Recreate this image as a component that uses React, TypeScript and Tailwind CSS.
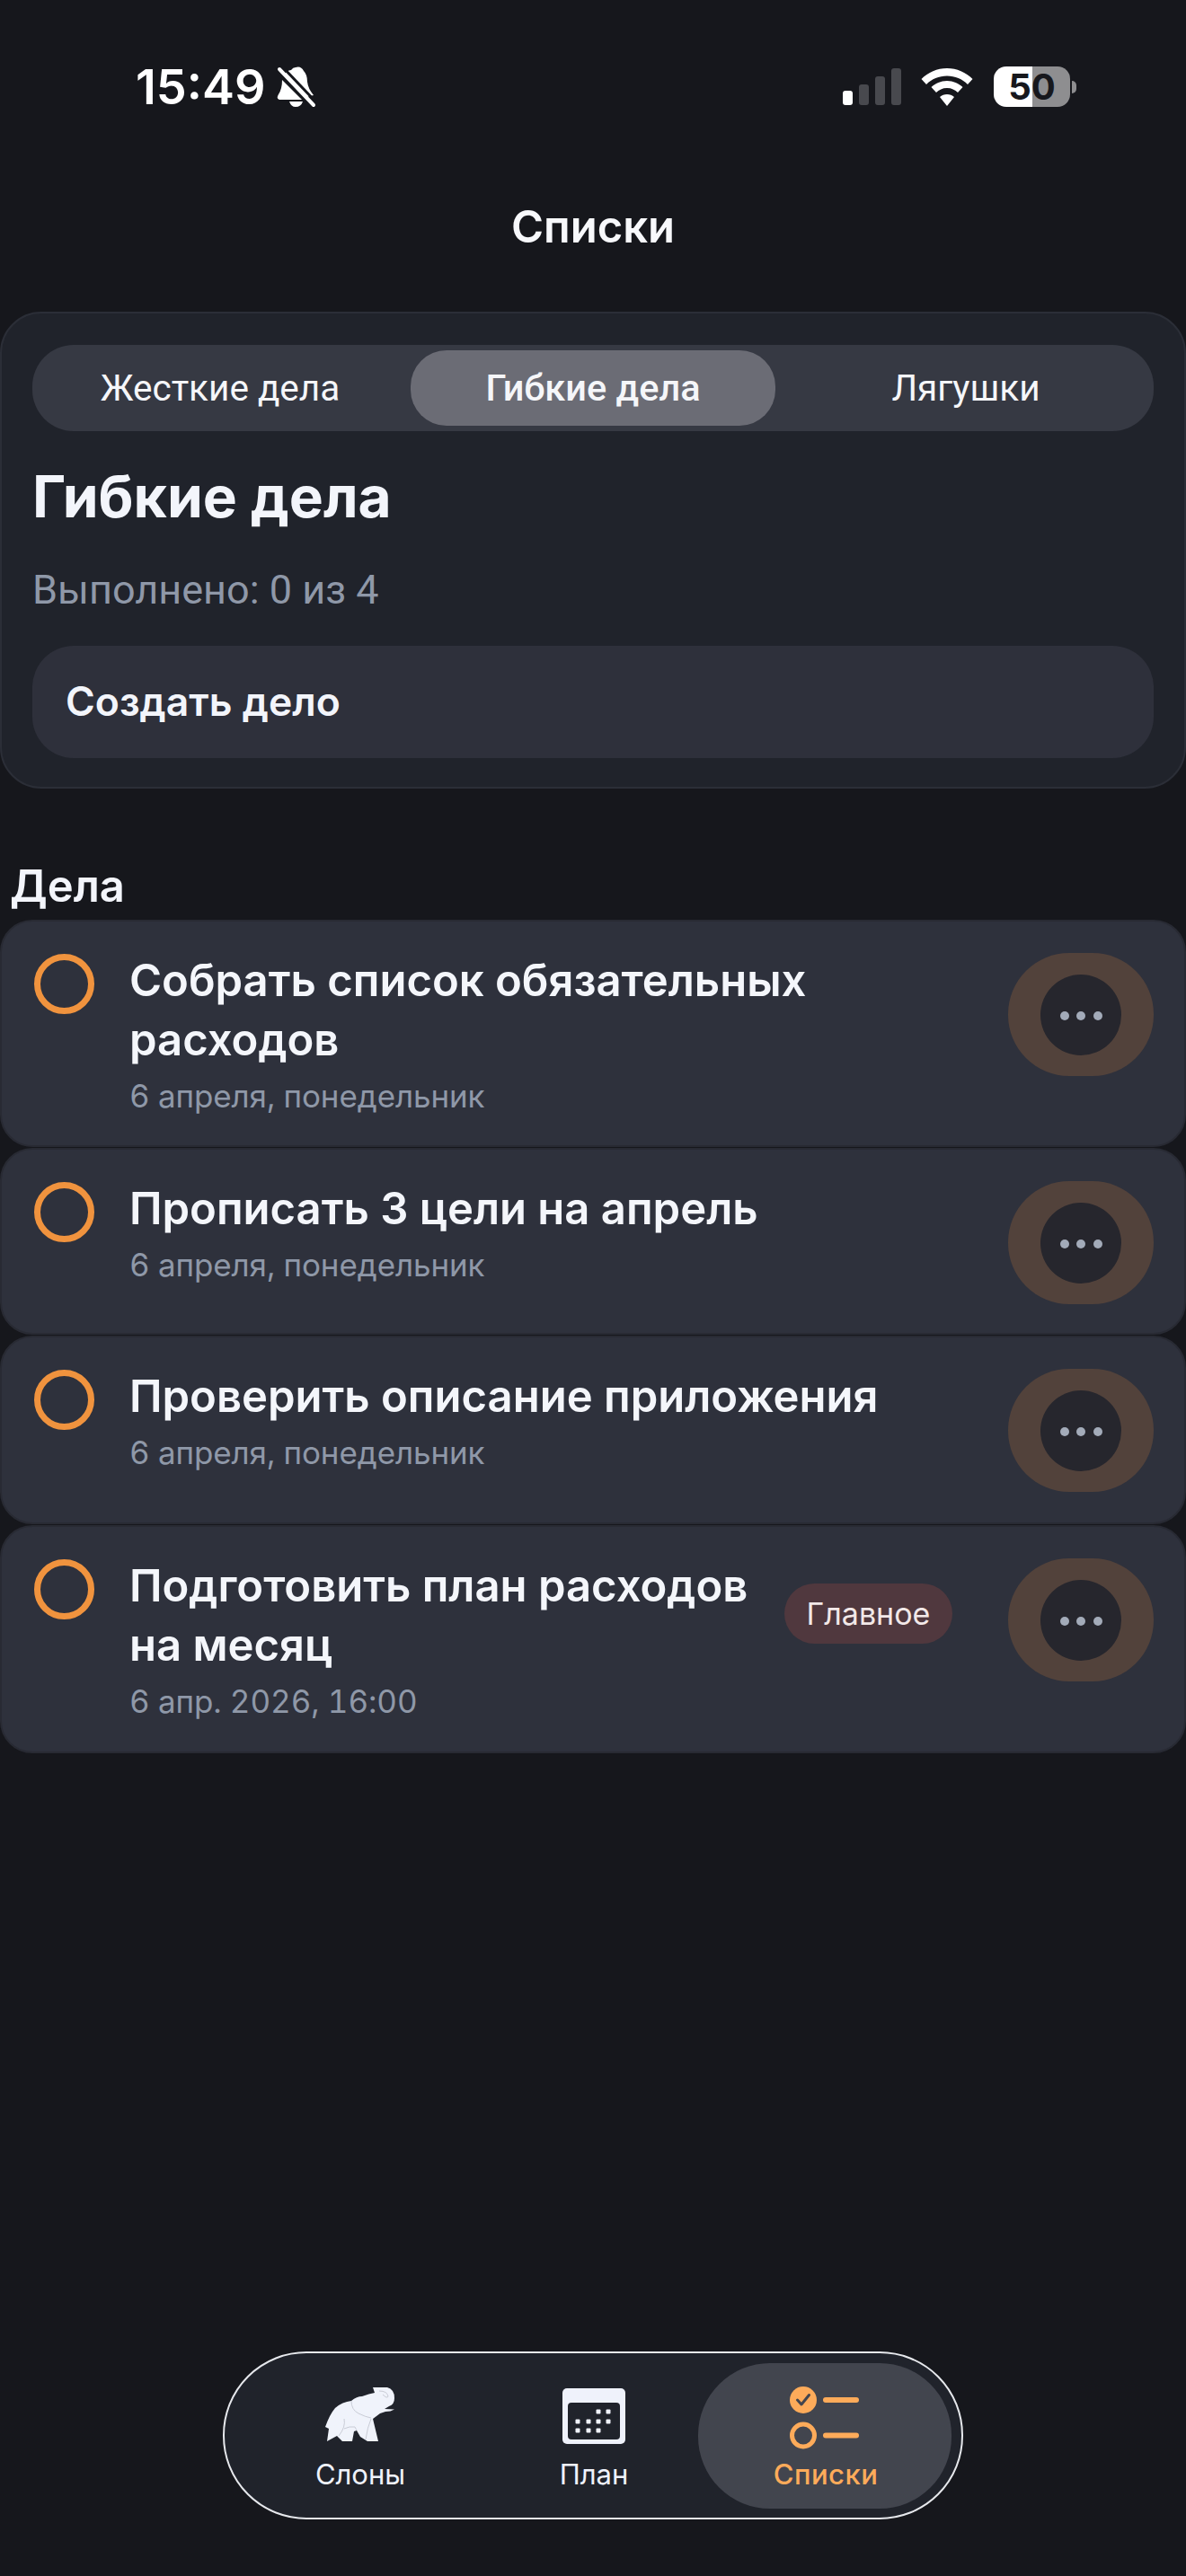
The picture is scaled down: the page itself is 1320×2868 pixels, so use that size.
const Row = ({ title, date, tag, h }: { title: string[]; date: string; tag?: boolean; h: string }) => (
  <div className={`${h} flex items-start rounded-[36px] border-2 border-[#282a33] bg-[#2e313c] pl-[36px] pr-[34px] pt-[34px]`}>
    <div className="mt-[2px] size-[67px] shrink-0 rounded-full border-[7px] border-[#f0933e]" />
    <div className="-mt-[1px] ml-[39px] min-w-0 flex-1">
      {title.map((t) => (
        <div key={t} className="h-[66px] whitespace-nowrap text-[49px] leading-[66px] font-semibold text-[#f4f6fb]">{t}</div>
      ))}
      <div className="mt-[7px] h-[44px] whitespace-nowrap text-[35px] leading-[44px] tracking-[-0.1px] tabular-nums text-[#8f98a8]">{date}</div>
    </div>
    {tag && (
      <div className="mr-[62px] mt-[29px] flex h-[67px] w-[187px] items-center justify-center rounded-full bg-[#50383e] text-[34px] text-[#f2e8e8]">Главное</div>
    )}
    <div className="mt-[1px] flex h-[137px] w-[162px] shrink-0 items-center justify-center rounded-[68px] bg-[#52423b]">
      <div className="flex size-[90px] items-center justify-center gap-[8.5px] rounded-full bg-[#26262d] pt-[3px]">
        <span className="size-[10px] rounded-full bg-[#a3abb9]" />
        <span className="size-[10px] rounded-full bg-[#a3abb9]" />
        <span className="size-[10px] rounded-full bg-[#a3abb9]" />
      </div>
    </div>
  </div>
);

const Elephant = () => (
  <svg width="80" height="62" viewBox="22 17 80 62" className="block">
    <path
      fill="#f0f3fb"
      d="M76 18 L92 18 Q100 20 100 30 Q100 37 94 39 L89 42 L100 42.500 Q96 45 90 45 L84 47 L76 53 L82 78 L70 78 L62 73 L58 66 L55 67 L53 78 L50 78 L42 78 L36 72 L25 78 L27 64 L23 62 Q28 48 34 41 Q42 34 52 33 Q58 28 64 28 Q72 25 78 24 Z"
    />
    <path fill="none" stroke="#c9ccd6" strokeWidth="1" d="M52 33 Q52 43 60 47 Q68 51 74 52 M83 22 Q92 22 93 28 Q92 31 87 26 M44 53 Q46 62 38 72 M44 64 Q50 61 56 62 L58 66 M74 53 Q70 62 68 76" />
  </svg>
);

const Calendar = () => (
  <svg width="70" height="62" viewBox="0 0 70 62" className="block">
    <rect width="70" height="62" rx="5" fill="#eff2fb" />
    <rect x="6" y="16" width="58" height="41" rx="4" fill="#20232b" />
    {[
      [40, 26], [51, 26],
      [17, 37], [29, 37], [40, 37], [51, 37],
      [17, 47], [29, 47], [40, 47],
    ].map(([x, y]) => (
      <rect key={`${x}-${y}`} x={x - 2.5} y={y - 2.5} width="5" height="5" rx="1" fill="#eff2fb" />
    ))}
  </svg>
);

const ListsIcon = () => (
  <svg width="80" height="70" viewBox="0 0 80 70" className="block">
    <circle cx="15" cy="15" r="15" fill="#fdab5a" />
    <path d="M8.500 15 L13 20 L21.500 9.500" fill="none" stroke="#42454e" strokeWidth="3" strokeLinecap="round" strokeLinejoin="round" />
    <rect x="37" y="12" width="40" height="6" rx="3" fill="#fdab5a" />
    <circle cx="15" cy="54.500" r="12.500" fill="none" stroke="#fdab5a" strokeWidth="5" />
    <rect x="37" y="51.500" width="40" height="6" rx="3" fill="#fdab5a" />
  </svg>
);

export default function App() {
  return (
    <div className="flex min-h-[2868px] w-[1320px] flex-col bg-[#16171c] font-['Inter',sans-serif] text-white">
      {/* status bar */}
      <div className="flex h-[194px] shrink-0 items-start justify-between pl-[151px] pr-[122px] pt-[70px]">
        <div className="flex items-center gap-[12px]">
          <span className="text-[54px] leading-[54px] font-semibold">15:49</span>
          <svg width="44" height="46" viewBox="0 0 44 46">
            <path fill="#fff" d="M21 1 Q27 -1 30 5 Q34 9 34 17 Q35 25 41 32 L33 34 L8 10 Q11 4 16 4 Q18 1 21 1Z M6 15 L28 37 L3 37 Q-1 36 2 31 Q6 25 6 15Z M14 39 L29 39 Q27 45 21 45 Q16 45 14 39Z" />
            <path stroke="#fff" strokeWidth="4" strokeLinecap="round" d="M3 3 L41 43" />
            <path stroke="#16171c" strokeWidth="3" d="M6 0 L44 40" />
          </svg>
        </div>
        <div className="mt-[4px] flex items-center">
          <div className="flex items-end gap-[7px]">
            <span className="h-[16px] w-[11px] rounded-[3px] bg-white" />
            <span className="h-[23px] w-[11px] rounded-[3px] bg-[#48494e]" />
            <span className="h-[32px] w-[11px] rounded-[3px] bg-[#48494e]" />
            <span className="h-[41px] w-[11px] rounded-[3px] bg-[#48494e]" />
          </div>
          <svg width="58" height="42" viewBox="0 0 58 42" className="ml-[22px]">
            <path fill="#fff" d="M29 0 C40 0 50 4.500 57.500 12 L52 18 C46 12 38 8.500 29 8.500 C20 8.500 12 12 6 18 L0.500 12 C8 4.500 18 0 29 0Z M29 14 C36 14 42 17 46.500 21 L41 27 C38 24 34 22 29 22 C24 22 20 24 17 27 L11.500 21 C16 17 22 14 29 14Z M29 29 C32 29 35 30 37 32 L29 42 L21 32 C23 30 26 29 29 29Z" />
          </svg>
          <div className="ml-[23px] flex items-center">
            <div className="flex h-[45px] w-[85px] items-center justify-center rounded-[14px] bg-[linear-gradient(90deg,#ffffff_0%,#ffffff_50.600%,#8e8e90_50.600%,#8e8e90_100%)] text-[40px] leading-none font-bold text-[#17181d]">50</div>
            <div className="ml-[2px] h-[14px] w-[5px] rounded-r-full bg-[#8e8e90]" />
          </div>
        </div>
      </div>

      <div className="h-[120px] shrink-0 pt-[34px] text-center text-[49px] leading-[50px] font-semibold text-[#f7f8fb]">Списки</div>

      {/* summary card */}
      <div className="mt-[33px] flex h-[531px] shrink-0 flex-col rounded-[46px] border-2 border-[#2b2e37] bg-[#20232b] px-[34px] pt-[35px]">
        <div className="flex h-[96px] shrink-0 gap-[9px] rounded-[46px] bg-[#363943] p-[6px] font-['Roboto',sans-serif] text-[40.5px] text-[#f5f6f9]">
          <div className="flex flex-1 items-center justify-center rounded-[40px]">Жесткие дела</div>
          <div className="flex flex-1 items-center justify-center rounded-[40px] bg-[#6b6c75] text-[41.5px] font-medium">Гибкие дела</div>
          <div className="flex flex-1 items-center justify-center rounded-[40px]">Лягушки</div>
        </div>
        <div className="mt-[37px] text-[64px] leading-[72px] font-bold text-[#f3f5fb]">Гибкие дела</div>
        <div className="mt-[43px] font-['Roboto',sans-serif] text-[45px] leading-[50px] text-[#8f98a8]">Выполнено: 0 из 4</div>
        <div className="mt-[37px] flex h-[125px] shrink-0 items-center rounded-[46px] bg-[#2e303b] pl-[37px] text-[44.5px] font-semibold text-[#f3f5fb]">Создать дело</div>
      </div>

      <div className="mt-[86px] h-[46px] pl-[11px] text-[49px] leading-[46px] font-semibold text-[#f3f5fb]">Дела</div>

      <div className="mt-[14px] flex flex-col gap-[1px]">
        <Row h="h-[253px]" title={["Собрать список обязательных", "расходов"]} date="6 апреля, понедельник" />
        <Row h="h-[208px]" title={["Прописать 3 цели на апрель"]} date="6 апреля, понедельник" />
        <Row h="h-[210px]" title={["Проверить описание приложения"]} date="6 апреля, понедельник" />
        <Row h="h-[254px]" tag title={["Подготовить план расходов", "на месяц"]} date="6 апр. 2026, 16:00" />
      </div>

      {/* bottom nav */}
      <div className="mt-auto mb-[63px] flex h-[187px] w-[824px] items-start self-center rounded-[93px] border-2 border-[#e6e8ec] bg-[#20232b] pl-[40px]">
        <div className="flex w-[222px] flex-col items-center pt-[37px]">
          <Elephant />
          <span className="mt-[17px] text-[31px] leading-[38px] text-[#eff2fb]">Слоны</span>
        </div>
        <div className="ml-[33px] flex w-[232px] flex-col items-center pt-[39px]">
          <Calendar />
          <span className="mt-[15px] text-[31px] leading-[38px] text-[#eff2fb]">План</span>
        </div>
        <div className="mt-[11px] flex h-[162px] w-[282px] flex-col items-center rounded-[80px] bg-[#42454e] pl-[2px] pt-[26px]">
          <ListsIcon />
          <span className="mt-[9px] text-[31px] leading-[38px] font-medium tracking-[0.5px] text-[#fdab5a]">Списки</span>
        </div>
      </div>
    </div>
  );
}
